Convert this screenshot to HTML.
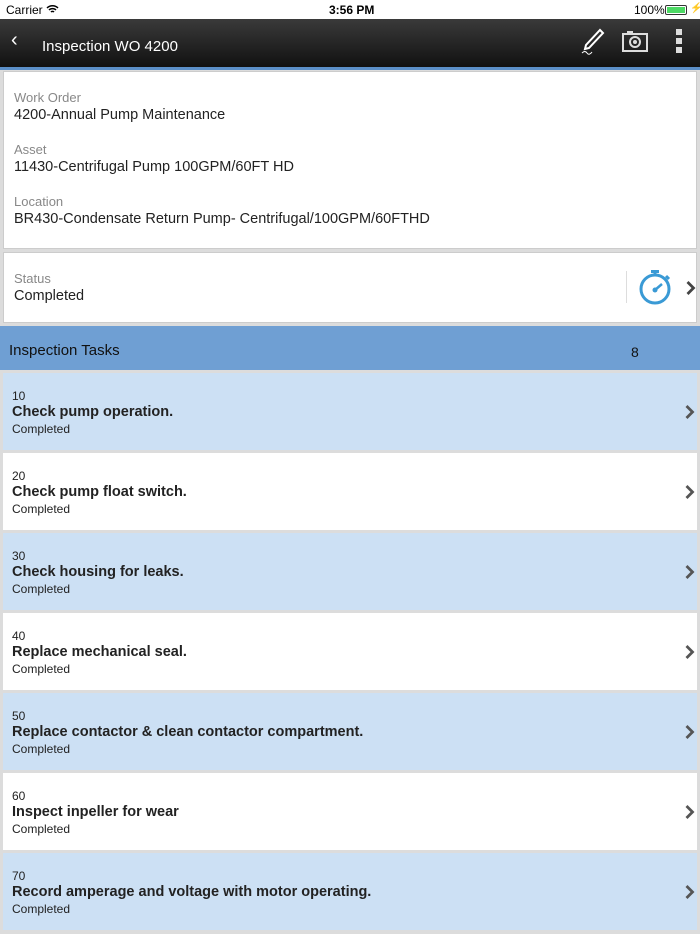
<!DOCTYPE html>
<html><head><style>
*{margin:0;padding:0;box-sizing:border-box}
body{width:700px;height:934px;overflow:hidden;background:#dcdcdc;font-family:"Liberation Sans",sans-serif;position:relative}
.abs{position:absolute}
.sb{top:0;left:0;width:700px;height:19px;background:#fff;font-size:12px;color:#000}
.nav{top:19px;left:0;width:700px;height:48px;background:linear-gradient(#3a3a3a,#111);color:#fff}
.blue{top:67px;left:0;width:700px;height:3px;background:#5b8fc8}
.card{background:#fff;border:1px solid #ccc;left:3px;width:694px}
.lbl{font-size:13px;color:#888}
.val{font-size:14.5px;color:#222;margin-top:2px}
.row{left:3px;width:694px;height:77px}
.row .n{position:absolute;left:9px;top:16px;font-size:12px;color:#222}
.row .t{position:absolute;left:9px;top:31px;font-size:14.5px;font-weight:bold;color:#222}
.row .s{position:absolute;left:9px;top:49px;font-size:12px;color:#222}
.chev{position:absolute;right:2px;top:31px}
</style></head><body>
<div class="abs sb"><span class="abs" style="left:6px;top:3px">Carrier <svg width="13" height="10" viewBox="0 0 13 10"><path d="M1 4a8 8 0 0 1 11 0M3 6a5 5 0 0 1 7 0M5 8a2 2 0 0 1 3 0" stroke="#000" stroke-width="1.5" fill="none"/></svg></span>
<span class="abs" style="left:329px;top:3px;font-weight:bold">3:56 PM</span>
<span class="abs" style="left:634px;top:3px">100%</span>
<span class="abs" style="left:665px;top:5px;width:22px;height:10px;border:1px solid #333;border-radius:2px;padding:1px"><span style="display:block;width:100%;height:100%;background:#4cd964"></span></span>
<span class="abs" style="left:690px;top:3px;font-size:10px">⚡</span></div>
<div class="abs nav">
<span class="abs" style="left:11px;top:10px;font-size:20px">‹</span>
<span class="abs" style="left:42px;top:19px;font-size:15px">Inspection WO 4200</span>
<svg class="abs" style="left:580px;top:9px" width="26" height="28" viewBox="0 0 26 28"><path d="M20 2l3 3L9 20l-4 1 1-4z" fill="none" stroke="#fff" stroke-width="2"/><path d="M2 25q3-3 5 0t5-1" stroke="#fff" fill="none"/></svg>
<svg class="abs" style="left:622px;top:11px" width="26" height="22" viewBox="0 0 26 22"><rect x="1" y="4" width="24" height="17" fill="none" stroke="#ddd" stroke-width="2"/><rect x="5" y="1" width="6" height="3" fill="#ddd"/><circle cx="13" cy="12" r="5" fill="none" stroke="#ddd" stroke-width="2"/><circle cx="13" cy="12" r="2" fill="#ddd"/></svg>
<div class="abs" style="left:676px;top:10px;width:6px"><div style="height:6px;background:#ddd;margin-bottom:3px"></div><div style="height:6px;background:#ddd;margin-bottom:3px"></div><div style="height:6px;background:#ddd"></div></div>
</div>
<div class="abs blue"></div>
<div class="abs card" style="top:71px;height:178px;padding:18px 10px">
<div class="lbl">Work Order</div><div class="val">4200-Annual Pump Maintenance</div>
<div class="lbl" style="margin-top:19px">Asset</div><div class="val">11430-Centrifugal Pump 100GPM/60FT HD</div>
<div class="lbl" style="margin-top:19px">Location</div><div class="val">BR430-Condensate Return Pump- Centrifugal/100GPM/60FTHD</div>
</div>
<div class="abs card" style="top:252px;height:71px;padding:18px 10px">
<div class="lbl">Status</div><div class="val">Completed</div>
<div class="abs" style="left:622px;top:18px;width:1px;height:32px;background:#ddd"></div>
<svg class="abs" style="left:633px;top:14px" width="36" height="40" viewBox="0 0 36 40"><circle cx="18" cy="22" r="14" fill="none" stroke="#3a9ad5" stroke-width="3"/><rect x="14" y="3" width="8" height="3" fill="#3a9ad5"/><rect x="16.5" y="5" width="3" height="4" fill="#3a9ad5"/><path d="M29 9l3 3" stroke="#3a9ad5" stroke-width="3"/><path d="M18 23l7-6" stroke="#3a9ad5" stroke-width="2.5"/><circle cx="18" cy="23" r="2.5" fill="#3a9ad5"/></svg>
<svg class="abs" style="left:681px;top:27px" width="11" height="16" viewBox="0 0 11 16"><path d="M2.5 2l6 6-6 6" stroke="#444" stroke-width="2.8" fill="none"/></svg>
</div>
<div class="abs" style="top:326px;left:0;width:700px;height:44px;background:#6f9fd3;color:#111">
<span class="abs" style="left:9px;top:16px;font-size:15px">Inspection Tasks</span>
<span class="abs" style="left:631px;top:18px;font-size:14px">8</span></div>
<div class="abs row" style="top:373px;background:#cce0f4"><div class="n">10</div><div class="t">Check pump operation.</div><div class="s">Completed</div><svg class="chev" width="11" height="16" viewBox="0 0 11 16"><path d="M2.5 2l6 6-6 6" stroke="#555" stroke-width="2.8" fill="none"/></svg></div>
<div class="abs row" style="top:453px;background:#fff"><div class="n">20</div><div class="t">Check pump float switch.</div><div class="s">Completed</div><svg class="chev" width="11" height="16" viewBox="0 0 11 16"><path d="M2.5 2l6 6-6 6" stroke="#555" stroke-width="2.8" fill="none"/></svg></div>
<div class="abs row" style="top:533px;background:#cce0f4"><div class="n">30</div><div class="t">Check housing for leaks.</div><div class="s">Completed</div><svg class="chev" width="11" height="16" viewBox="0 0 11 16"><path d="M2.5 2l6 6-6 6" stroke="#555" stroke-width="2.8" fill="none"/></svg></div>
<div class="abs row" style="top:613px;background:#fff"><div class="n">40</div><div class="t">Replace mechanical seal.</div><div class="s">Completed</div><svg class="chev" width="11" height="16" viewBox="0 0 11 16"><path d="M2.5 2l6 6-6 6" stroke="#555" stroke-width="2.8" fill="none"/></svg></div>
<div class="abs row" style="top:693px;background:#cce0f4"><div class="n">50</div><div class="t">Replace contactor &amp; clean contactor compartment.</div><div class="s">Completed</div><svg class="chev" width="11" height="16" viewBox="0 0 11 16"><path d="M2.5 2l6 6-6 6" stroke="#555" stroke-width="2.8" fill="none"/></svg></div>
<div class="abs row" style="top:773px;background:#fff"><div class="n">60</div><div class="t">Inspect inpeller for wear</div><div class="s">Completed</div><svg class="chev" width="11" height="16" viewBox="0 0 11 16"><path d="M2.5 2l6 6-6 6" stroke="#555" stroke-width="2.8" fill="none"/></svg></div>
<div class="abs row" style="top:853px;background:#cce0f4"><div class="n">70</div><div class="t">Record amperage and voltage with motor operating.</div><div class="s">Completed</div><svg class="chev" width="11" height="16" viewBox="0 0 11 16"><path d="M2.5 2l6 6-6 6" stroke="#555" stroke-width="2.8" fill="none"/></svg></div>
</body></html>
